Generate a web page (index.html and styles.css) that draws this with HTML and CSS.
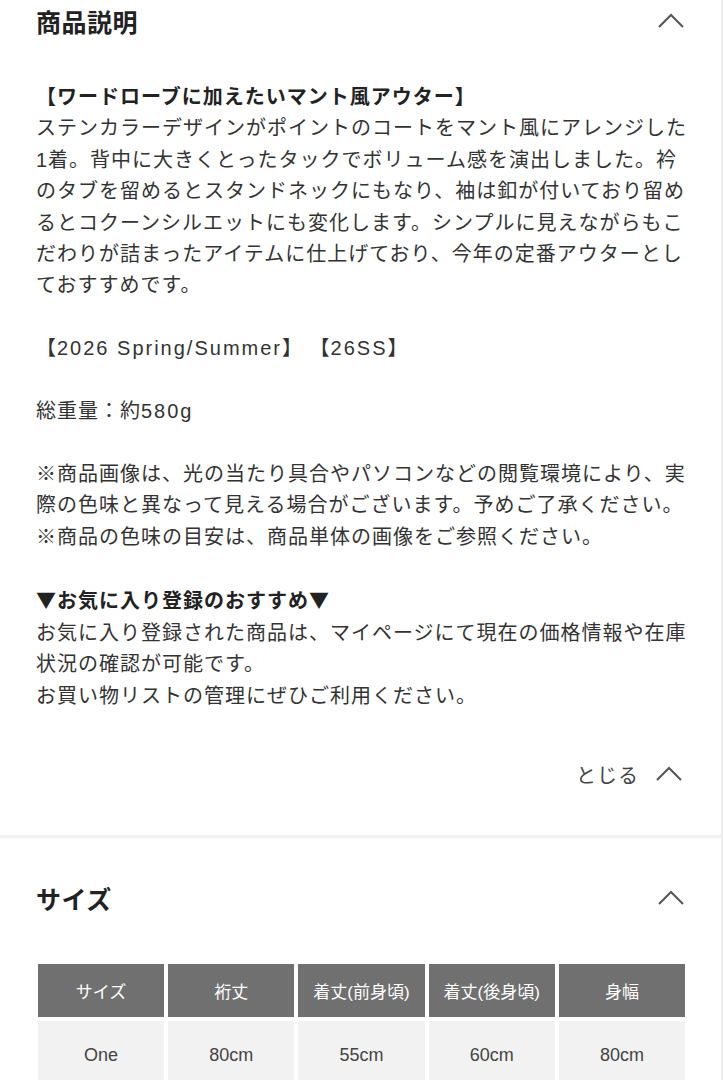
FILE: index.html
```html
<!DOCTYPE html>
<html lang="ja">
<head>
<meta charset="utf-8">
<title>商品説明</title>
<link rel="stylesheet" href="styles.css">
</head>
<body>
<div class="page">
  <section class="section">
    <div class="sec-head">
      <h2 class="sec-title">商品説明</h2>
      <svg class="chev" width="28" height="16" viewBox="0 0 28 16"><path d="M2 14 L14 2 L26 14" fill="none" stroke="#555" stroke-width="2"/></svg>
    </div>
    <div class="desc">
      <p><strong>【ワードローブに加えたいマント風アウター】</strong><br>ステンカラーデザインがポイントのコートをマント風にアレンジした1着。背中に大きくとったタックでボリューム感を演出しました。衿のタブを留めるとスタンドネックにもなり、袖は釦が付いており留めるとコクーンシルエットにも変化します。シンプルに見えながらもこだわりが詰まったアイテムに仕上げており、今年の定番アウターとしておすすめです。</p>
      <p>【<span class="en">2026 Spring/Summer</span>】 【<span class="en">26SS</span>】</p>
      <p>総重量：約<span class="en">580g</span></p>
      <p>※商品画像は、光の当たり具合やパソコンなどの閲覧環境により、実際の色味と異なって見える場合がございます。予めご了承ください。<br>※商品の色味の目安は、商品単体の画像をご参照ください。</p>
      <p><strong><span class="tri">▼</span>お気に入り登録のおすすめ<span class="tri">▼</span></strong><br>お気に入り登録された商品は、マイページにて現在の価格情報や在庫状況の確認が可能です。<br>お買い物リストの管理にぜひご利用ください。</p>
    </div>
    <div class="close-row">
      <span class="close-label">とじる</span>
      <svg class="chev" width="28" height="16" viewBox="0 0 28 16"><path d="M2 14 L14 2 L26 14" fill="none" stroke="#555" stroke-width="2"/></svg>
    </div>
  </section>
  <div class="divider"></div>
  <section class="section">
    <div class="sec-head size-head">
      <h2 class="sec-title">サイズ</h2>
      <svg class="chev" width="28" height="16" viewBox="0 0 28 16"><path d="M2 14 L14 2 L26 14" fill="none" stroke="#555" stroke-width="2"/></svg>
    </div>
    <div class="size-table">
      <div class="th">サイズ</div>
      <div class="th">裄丈</div>
      <div class="th">着丈(前身頃)</div>
      <div class="th">着丈(後身頃)</div>
      <div class="th">身幅</div>
      <div class="td">One</div>
      <div class="td">80cm</div>
      <div class="td">55cm</div>
      <div class="td">60cm</div>
      <div class="td">80cm</div>
    </div>
  </section>
</div>
</body>
</html>
```

FILE: styles.css
```css
html, body {
  margin: 0;
  padding: 0;
  background: #fff;
}
body {
  font-family: "Liberation Sans", "Noto Sans CJK JP", sans-serif;
  color: #333;
}
.page {
  width: 721px;
  border-right: 2px solid #eeeeee;
  min-height: 1080px;
}
.section {
  padding: 0 0 0 36px;
}
.sec-head {
  height: 42px;
  display: flex;
  align-items: center;
  justify-content: space-between;
  padding-right: 36px;
}
.sec-title {
  margin: 0;
  font-size: 25px;
  font-weight: bold;
  color: #222;
  letter-spacing: 0.5px;
}
.chev {
  display: block;
}
.desc {
  margin-top: 40px;
  width: 653px;
  font-size: 20px;
  letter-spacing: 1px;
  line-height: 31.4px;
  color: #333;
}
.desc p {
  margin: 0 0 31.4px 0;
}
.desc p:last-child {
  margin-bottom: 0;
}
.desc strong {
  font-weight: bold;
  color: #222;
}
.en {
  letter-spacing: 2px;
}
.tri {
  font-family: "Noto Sans CJK JP", sans-serif;
}
.close-row {
  margin-top: 42px;
  height: 40px;
  display: flex;
  align-items: center;
  justify-content: flex-end;
  gap: 16px;
  padding-right: 38px;
}
.close-label {
  font-family: "Noto Sans CJK JP", sans-serif;
  font-size: 20px;
  letter-spacing: 1px;
  color: #444;
}
.divider {
  margin-top: 41px;
  height: 3px;
  background: #f2f2f2;
  border-bottom: 1px solid #fafafa;
}
.size-head {
  margin-top: 38px;
}
.size-table {
  margin: 45px 0 0 2px;
  width: 647px;
  display: grid;
  grid-template-columns: repeat(5, 1fr);
  gap: 4px;
}
.th {
  height: 53px;
  background: #707070;
  color: #fff;
  font-size: 17px;
  display: flex;
  align-items: center;
  justify-content: center;
}
.td {
  height: 68px;
  background: #f2f2f2;
  color: #444;
  font-size: 18px;
  display: flex;
  align-items: center;
  justify-content: center;
}
```
